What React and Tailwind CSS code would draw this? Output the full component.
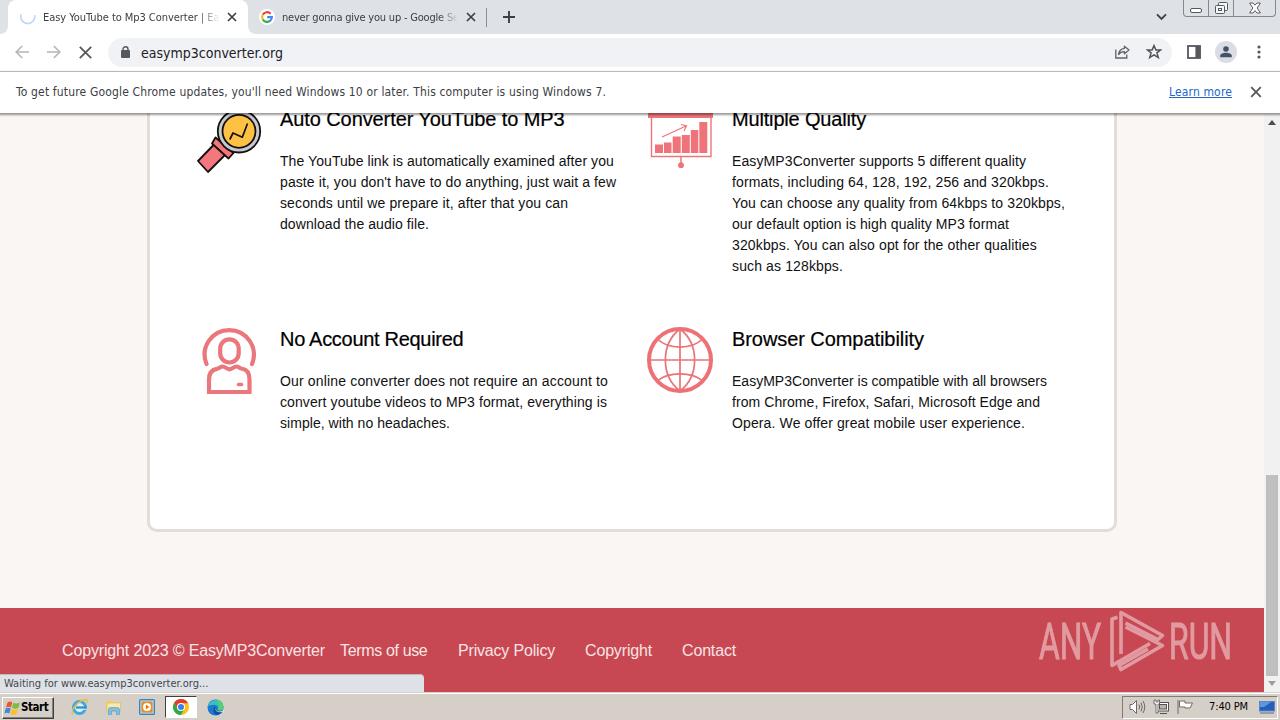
const ui = "font-['DejaVu_Sans_Condensed','DejaVu_Sans',sans-serif] whitespace-nowrap";

function Cross({ size, width, color }) {
  return (
    <svg width={size} height={size} viewBox="0 0 10 10" className="shrink-0">
      <path d="M1 1L9 9M9 1L1 9" stroke={color} strokeWidth={width} fill="none" />
    </svg>
  );
}

function GoogleG() {
  return (
    <svg width="16" height="16" viewBox="0 0 16 16" className="shrink-0">
      <circle cx="8" cy="8" r="8" fill="#fff" />
      <g fill="none" strokeWidth="2.1">
        <path d="M11.6 4.7A4.9 4.9 0 0 0 3.8 5.6" stroke="#ea4335" />
        <path d="M3.8 5.5A4.9 4.9 0 0 0 3.8 10.5" stroke="#fbbc05" />
        <path d="M3.8 10.4A4.9 4.9 0 0 0 11.4 11.6" stroke="#34a853" />
        <path d="M11.3 11.7A4.9 4.9 0 0 0 12.9 8.1H8.2" stroke="#4285f4" />
      </g>
    </svg>
  );
}

function ChromeLogo() {
  return (
    <svg width="16" height="16" viewBox="0 0 16 16">
      <circle cx="8" cy="8" r="8" fill="#fbc116" />
      <path d="M8 4.2H15A8 8 0 0 0 1.07 4L4.6 10Z" fill="#e33b2e" />
      <path d="M1.07 4A8 8 0 0 0 8 16L11.3 10L8 8L4.7 10Z" fill="#2da94f" />
      <circle cx="8" cy="8" r="4" fill="#fff" />
      <circle cx="8" cy="8" r="3" fill="#3b7ded" />
    </svg>
  );
}

function TabStrip() {
  return (
    <div className={`flex h-[34px] bg-[#dee1e6] text-[11px] text-[#3c4043] ${ui}`}>
      <div className="flex w-2 items-end bg-white">
        <div className="h-[34px] w-2 rounded-br-lg bg-[#dee1e6]" />
      </div>
      <div className="flex w-[240px] items-center rounded-t-lg bg-white pl-3">
        <svg width="16" height="16" viewBox="0 0 16 16" className="mr-[7px] shrink-0">
          <path d="M1.2 5.2A7 7 0 1 0 14.6 6" stroke="#bfd3f6" strokeWidth="1.6" fill="none" />
        </svg>
        <div className="w-[176px] overflow-hidden pt-[2px] tracking-[-0.05px] [mask-image:linear-gradient(to_right,black_155px,transparent_177px)]">
          Easy YouTube to Mp3 Converter | EasyMP3
        </div>
        <div className="ml-[8px]"><Cross size={10} width={1.7} color="#3c4043" /></div>
      </div>
      <div className="flex w-[238px] bg-white">
        <div className="flex h-[34px] w-full items-center rounded-bl-lg bg-[#dee1e6] pl-[11px]">
          <GoogleG />
          <div className="ml-[7px] w-[175px] overflow-hidden pt-[2px] tracking-[-0.2px] [mask-image:linear-gradient(to_right,black_157px,transparent_176px)]">
            never gonna give you up - Google Search
          </div>
          <div className="ml-[9px]"><Cross size={10} width={1.7} color="#3c4043" /></div>
        </div>
      </div>
      <div className="mt-[8px] h-[19px] w-px bg-[#8a8d91]" />
      <svg width="12" height="12" viewBox="0 0 12 12" className="ml-4 mt-[11px]">
        <path d="M6 0V12M0 6H12" stroke="#3c4043" strokeWidth="1.9" />
      </svg>
      <svg width="11" height="8" viewBox="0 0 11 8" className="ml-auto mt-[13px]">
        <path d="M1 1.3L5.5 5.8L10 1.3" stroke="#3c4043" strokeWidth="1.9" fill="none" />
      </svg>
      <div className="ml-[16px] mr-[4px] flex h-[17px] w-[93px] rounded-b border border-t-0 border-[#85888f]">
        <div className="flex w-[25px] items-center justify-center border-r border-[#85888f]">
          <svg width="12" height="17" viewBox="0 0 12 17"><rect x=".5" y="8.5" width="11" height="4" rx="1.5" fill="#fff" stroke="#55585e" /></svg>
        </div>
        <div className="flex w-[25px] items-center justify-center border-r border-[#85888f]">
          <svg width="13" height="14" viewBox="0 0 13 14" fill="#f4f5f7" stroke="#55585e">
            <rect x="3.5" y="1.5" width="9" height="8" rx="1" />
            <rect x=".5" y="4.5" width="9" height="8" rx="1" />
            <rect x="3.5" y="7.5" width="3" height="2" />
          </svg>
        </div>
        <div className="flex flex-1 items-center justify-center">
          <svg width="12" height="12" viewBox="0 0 12 12">
            <path d="M.6 1H4L6 3.2L8 1H11.4L8.2 6L11.4 11H8L6 8.6L4 11H.6L3.8 6Z" fill="#fff" stroke="#5c5f66" />
          </svg>
        </div>
      </div>
    </div>
  );
}

function Toolbar() {
  return (
    <div className="flex h-[38px] shrink-0 items-center border-b border-[#d4d5d7] bg-white pb-px">
      <svg width="14" height="14" viewBox="0 0 14 14" className="ml-[15px]" fill="none" stroke="#b5b7ba" strokeWidth="1.7">
        <path d="M14 7H1.4M7.2 1L1.2 7L7.2 13" />
      </svg>
      <svg width="14" height="14" viewBox="0 0 14 14" className="ml-[18px]" fill="none" stroke="#b5b7ba" strokeWidth="1.7">
        <path d="M0 7H12.6M6.8 1L12.8 7L6.8 13" />
      </svg>
      <svg width="13" height="13" viewBox="0 0 13 13" className="ml-[18px]" fill="none" stroke="#55585c" strokeWidth="1.8">
        <path d="M.8 .8L12.2 12.2M12.2 .8L.8 12.2" />
      </svg>
      <div className="ml-[16px] flex h-[29px] w-[1064px] items-center rounded-full bg-[#f0f2f5] pl-[13px]">
        <svg width="9" height="12" viewBox="0 0 9 12">
          <rect x="0" y="4" width="9" height="8" rx="1" fill="#55585c" />
          <path d="M2 5V3.2A2.5 2.5 0 0 1 7 3.2V5" stroke="#55585c" strokeWidth="1.4" fill="none" />
        </svg>
        <span className={`ml-[11px] pt-px text-[14px] leading-5 text-[#202124] ${ui}`}>easymp3converter.org</span>
        <svg width="15" height="14" viewBox="0 0 15 14" className="ml-auto" fill="none" stroke="#5f6368" strokeWidth="1.3">
          <path d="M.8 4.5V13H11.8V9.6" />
          <path d="M9.4 1.2L14 5L9.4 8.8V6.7C6.6 6.6 4.9 7.6 3.5 9.5C3.9 6.4 5.8 3.8 9.4 3.3Z" strokeLinejoin="round" />
        </svg>
        <svg width="16" height="16" viewBox="0 0 16 16" className="ml-[16px] mr-[10px]">
          <path d="M8 1.6L9.9 6H14.6L10.9 8.9L12.3 13.6L8 10.8L3.7 13.6L5.1 8.9L1.4 6H6.1Z" fill="none" stroke="#4f5257" strokeWidth="1.5" />
        </svg>
      </div>
      <svg width="14" height="14" viewBox="0 0 14 14" className="ml-[15px]">
        <rect x="1" y="1" width="12" height="12" fill="none" stroke="#55585c" strokeWidth="1.8" />
        <rect x="8.4" y="1" width="5" height="12" fill="#55585c" />
      </svg>
      <svg width="22" height="22" viewBox="0 0 22 22" className="ml-[14px]">
        <circle cx="11" cy="11" r="11" fill="#dadde3" />
        <circle cx="11" cy="8" r="2.8" fill="#475069" />
        <path d="M5.2 16.2V14.8C5.2 12.8 8.2 11.8 11 11.8S16.8 12.8 16.8 14.8V16.2Z" fill="#475069" />
      </svg>
      <svg width="4" height="14" viewBox="0 0 4 14" className="ml-5" fill="#55585c">
        <circle cx="2" cy="2" r="1.6" /><circle cx="2" cy="7" r="1.6" /><circle cx="2" cy="12" r="1.6" />
      </svg>
    </div>
  );
}

function InfoBar() {
  return (
    <div className={`relative z-10 flex h-[41px] shrink-0 items-center bg-white pb-[2px] pl-4 text-[12px] text-[#3c4043] shadow-[0_1px_2px_1px_rgba(0,0,0,0.4)] ${ui}`}>
      <span className="tracking-[0.16px]">To get future Google Chrome updates, you'll need Windows 10 or later. This computer is using Windows 7.</span>
      <span className="ml-auto mr-[18px] tracking-[0.15px] text-[#2467c8] underline">Learn more</span>
      <div className="mr-[18px]"><Cross size={12} width={1.5} color="#55585c" /></div>
    </div>
  );
}

function Magnifier() {
  return (
    <svg width="66" height="66" viewBox="0 0 66 66" className="shrink-0 overflow-visible" stroke="#15100f" strokeWidth="1.8" strokeLinejoin="round">
      <path d="M17 37.5L1 54L11 65L28 48Z" fill="#f3777c" />
      <path d="M18.500 30.500L15 36.500L31.500 51.500L36.500 46Z" fill="#f3777c" />
      <circle cx="42" cy="24.300" r="21.200" fill="#c6c8d2" />
      <circle cx="42" cy="24.300" r="16.500" fill="#fdc143" />
      <path d="M32.800 32.500L36 26L45.300 30.200L50.500 16.500" fill="none" strokeWidth="1.700" />
    </svg>
  );
}

function Chart() {
  return (
    <svg width="66" height="66" viewBox="0 0 66 66" className="shrink-0" fill="#ee7479">
      <rect x="1" y="2" width="65" height="9" />
      <path d="M4.500 11V49.500H64V11" fill="none" stroke="#ee7479" strokeWidth="1.400" />
      <rect x="8" y="37.500" width="8" height="8.500" />
      <rect x="17" y="35.500" width="7.500" height="10.500" />
      <rect x="25.700" y="29.500" width="8" height="16.500" />
      <rect x="34.800" y="28" width="8" height="18" />
      <rect x="43.800" y="23" width="7.500" height="23" />
      <rect x="52.300" y="15" width="8" height="31" />
      <path d="M15 30L39 19M34 17.500L39.500 18.800L37 24" fill="none" stroke="#ee7479" strokeWidth="1.200" />
      <path d="M34 49V56" stroke="#ee7479" strokeWidth="1.500" />
      <circle cx="34" cy="58.200" r="2.900" />
    </svg>
  );
}

function Person() {
  return (
    <svg width="66" height="68" viewBox="0 0 66 68" className="shrink-0" fill="none" stroke="#ea777b" strokeWidth="4.200" strokeLinecap="round" strokeLinejoin="round">
      <path d="M9.500 37A24.600 24.600 0 1 1 55 37" />
      <rect x="23.200" y="12.300" width="18.500" height="23.200" rx="9.200" />
      <path d="M12 65V52.500C12 45.500 15.500 42.500 20 41.800C22.500 41.400 23.500 39.500 25.500 39.500C28.500 39.500 29.500 42.300 32.500 42.300S36.500 39.500 39.500 39.500C41.500 39.500 42.500 41.400 45 41.800C49.500 42.500 52.500 45.500 52.500 52.500V65Z" strokeLinejoin="miter" />
      <path d="M41.500 57.500H44.500" strokeWidth="3.600" />
    </svg>
  );
}

function Globe() {
  return (
    <svg width="66" height="66" viewBox="0 0 66 66" className="shrink-0" fill="none" stroke="#ec7276" strokeWidth="1.700">
      <circle cx="33" cy="33" r="31" strokeWidth="4" />
      <path d="M33 2V64M2 33H64" />
      <path d="M33 2C13.500 17 13.500 49 33 64C52.500 49 52.500 17 33 2Z" />
      <path d="M10.500 12C21 22.700 45 22.700 55.500 12M10.500 54C21 44.500 45 44.500 55.500 54" />
    </svg>
  );
}

function Feature({ icon, title, children, gap }) {
  return (
    <div className={`flex ${gap}`}>
      <div className="mt-[3px]">{icon}</div>
      <div className="whitespace-nowrap text-[14px] leading-[21px] text-[#111]">
        <h3 className="mb-[17px] text-[20px] leading-[30px] text-black [-webkit-text-stroke:0.2px_black]">{title}</h3>
        {children}
      </div>
    </div>
  );
}

function Page() {
  return (
    <div className="flex min-w-0 flex-1 flex-col overflow-hidden bg-[#faf6f3] font-['Liberation_Sans',Arial,sans-serif]">
      <div className="ml-[147px] h-[419px] w-[970px] shrink-0 overflow-hidden rounded-b-[10px] border-[3px] border-t-0 border-[#e3ddd6] bg-white pl-[47px]">
        <div className="-mt-[9px] grid grid-cols-[450px_450px] grid-rows-[220px_200px]">
          <Feature gap="gap-[17px]" icon={<Magnifier />} title={<span className="tracking-[-0.09px]">Auto Converter YouTube to MP3</span>}>
            <p className="tracking-[0.07px]">The YouTube link is automatically examined after you</p>
            <p className="tracking-[0.09px]">paste it, you don't have to do anything, just wait a few</p>
            <p className="tracking-[0.12px]">seconds until we prepare it, after that you can</p>
            <p className="tracking-[0.08px]">download the audio file.</p>
          </Feature>
          <Feature gap="gap-[19px]" icon={<Chart />} title={<span className="tracking-[-0.17px]">Multiple Quality</span>}>
            <p className="tracking-[0.106px]">EasyMP3Converter supports 5 different quality</p>
            <p className="tracking-[0.13px]">formats, including 64, 128, 192, 256 and 320kbps.</p>
            <p className="tracking-[0.117px]">You can choose any quality from 64kbps to 320kbps,</p>
            <p className="tracking-[0.086px]">our default option is high quality MP3 format</p>
            <p className="tracking-[0.136px]">320kbps. You can also opt for the other qualities</p>
            <p className="tracking-[0.128px]">such as 128kbps.</p>
          </Feature>
          <Feature gap="gap-[17px]" icon={<Person />} title={<span className="tracking-[-0.3px]">No Account Required</span>}>
            <p className="tracking-[0.16px]">Our online converter does not require an account to</p>
            <p className="tracking-[0.095px]">convert youtube videos to MP3 format, everything is</p>
            <p className="tracking-[0.043px]">simple, with no headaches.</p>
          </Feature>
          <Feature gap="gap-[19px]" icon={<Globe />} title={<span className="tracking-[-0.07px]">Browser Compatibility</span>}>
            <p className="tracking-[0.014px]">EasyMP3Converter is compatible with all browsers</p>
            <p className="tracking-[0.063px]">from Chrome, Firefox, Safari, Microsoft Edge and</p>
            <p className="tracking-[0.124px]">Opera. We offer great mobile user experience.</p>
          </Feature>
        </div>
      </div>
      <footer className="mt-[76px] flex h-[84px] shrink-0 items-start whitespace-nowrap bg-[#c74852] pl-[62px] pt-[31px] text-[16px] leading-6 text-[#f8e4e5]">
        <span className="w-[278px] tracking-[-0.15px]">Copyright 2023 © EasyMP3Converter</span>
        <span className="w-[118px] tracking-[-0.35px]">Terms of use</span>
        <span className="w-[127px] tracking-[-0.18px]">Privacy Policy</span>
        <span className="w-[97px] tracking-[-0.16px]">Copyright</span>
        <span className="tracking-[-0.16px]">Contact</span>
      </footer>
    </div>
  );
}

function Watermark() {
  return (
    <svg width="196" height="66" viewBox="0 0 196 66" className="absolute left-[1037px] top-[608px]" fill="#fff" opacity="0.45" fontFamily="Roboto, sans-serif" fontSize="50" fontWeight="400">
      <g stroke="#fff" strokeWidth="1">
        <text x="2" y="50.500" textLength="62" lengthAdjust="spacingAndGlyphs">ANY</text>
        <text x="132" y="50.500" textLength="63" lengthAdjust="spacingAndGlyphs">RUN</text>
      </g>
      <path
        d="M80.500 9.300L75 11V57.500L113 35.500M84 46V4.500L125.500 27.500L121 31.500L88.500 15M88.500 19L125.500 37.500L84 61.500L82 57.500L111 41"
        fill="none" stroke="#fff" strokeWidth="3.600" strokeLinejoin="round" />
    </svg>
  );
}

function ScrollBar() {
  return (
    <div className="flex w-4 shrink-0 flex-col items-center bg-[#f1f1f1]">
      <svg width="8" height="5" viewBox="0 0 8 5" className="mt-[7px]"><path d="M0 5L4 0L8 5Z" fill="#4c4c4c" /></svg>
      <div className="mt-[350px] h-[201px] w-3 bg-[#bfbfbf]" />
      <svg width="8" height="5" viewBox="0 0 8 5" className="mt-[5px]"><path d="M0 0H8L4 5Z" fill="#9c9c9c" /></svg>
    </div>
  );
}

function TaskBar() {
  return (
    <div className={`flex h-7 shrink-0 items-end border-t border-[#d5d1c8] bg-[#d6cfc8] text-[11px] text-black ${ui}`}>
      <div className="flex h-[27px] w-full items-center border-t border-white">
        <div className="ml-[2px] mt-[2px] flex h-[22px] w-[52px] items-center border border-b-[#404040] border-l-white border-r-[#404040] border-t-white pl-px shadow-[inset_-1px_-1px_0_#85807a]">
          <svg width="17" height="16" viewBox="0 0 17 16" className="shrink-0">
            <path d="M3.500 2.500C5.500 1 7 1.500 8.300 2.300L7 7.500C5.500 6.500 4 6.500 2 7.500Z" fill="#e8582a" />
            <path d="M9.300 2.800C11.500 4 13.500 3.800 16 2.500L14.300 8C12 9 10.500 8.800 8 7.800Z" fill="#7dbb42" />
            <path d="M1.700 8.600C3.500 7.500 5.300 7.600 6.700 8.500L5.300 13.500C4 12.500 2.500 12.300 .4 13.500Z" fill="#3c8ad8" />
            <path d="M7.700 8.800C10 10 12 9.800 14 9L12.500 14C10.500 15.500 8.500 15 6.300 14Z" fill="#fac02c" />
          </svg>
          <span className="text-[11.5px] font-bold tracking-[-0.45px]">Start</span>
        </div>
        <svg width="18" height="18" viewBox="0 0 18 18" className="ml-[17px]">
          <circle cx="8.500" cy="9.500" r="6" fill="#d9effa" stroke="#3fa9e2" strokeWidth="3" />
          <path d="M5 9.500H15.500" stroke="#2a90d2" strokeWidth="2.200" />
          <path d="M12 12H17V10.700H12Z" fill="#d6cfc8" />
          <path d="M2 16.500C-1 14 4 6 11 2.500C16 .3 17.500 2 15.500 5.500" fill="none" stroke="#e9bd45" strokeWidth="1.400" />
        </svg>
        <svg width="17" height="16" viewBox="0 0 17 16" className="ml-[16px]">
          <path d="M1 1.500H6L7.500 3H14V13H1Z" fill="#efcf74" />
          <path d="M2 4H15.500V12H2Z" fill="#f9e8a8" stroke="#d6b559" strokeWidth=".6" />
          <path d="M3.500 15.500V10.500Q3.500 8.500 5.500 8.500H12.500Q14.500 8.500 14.500 10.500V15.500H11.500V12H6.500V15.500Z" fill="#7cc0e6" stroke="#4e9ccc" strokeWidth=".6" />
        </svg>
        <svg width="16" height="16" viewBox="0 0 16 16" className="ml-[17px]">
          <rect x=".6" y=".6" width="14.800" height="14.800" rx="1" fill="#a7d0ee" stroke="#4480b5" strokeWidth="1.200" />
          <rect x="2.500" y="2.500" width="11" height="11" rx="1.500" fill="#f28c1d" />
          <circle cx="8" cy="8" r="4" fill="#fff" />
          <path d="M6.800 5.500L10.500 8L6.800 10.500Z" fill="#e97b10" />
        </svg>
        <div className="ml-[10px] flex h-[22px] w-[32px] items-center justify-center border border-b-white border-l-[#404040] border-r-white border-t-[#404040] bg-white">
          <ChromeLogo />
        </div>
        <svg width="17" height="17" viewBox="0 0 17 17" className="ml-[10px]">
          <circle cx="8.500" cy="8.500" r="8" fill="#1b79cf" />
          <path d="M.6 8A8 8 0 0 1 16.500 8C16.800 11 13.500 12.200 10.500 11C12 9 10.500 5.800 7 5.800C4 5.800 1.500 6.500 .6 8Z" fill="#38c1c4" />
          <path d="M9 .6C13.500 .8 16.600 4 16.500 8C16.300 11.500 13 12.200 10.500 11C12.500 8 13 4 9 .6Z" fill="#56cf6d" />
          <path d="M10.500 11C8.500 10 8 8.500 8.800 7.500C6 8 5 14 9.500 16C12.500 15.500 14.500 14 15.500 12C14 12.700 11.500 12.300 10.500 11Z" fill="#12509c" />
          <path d="M8.600 7.600C7.600 9 8.500 11.500 11 12.200C13.500 12.800 15.500 12 16.800 10.800L17 12.500L13 13.200C10 13.300 7 11 8.600 7.600Z" fill="#d6e9ef" />
        </svg>
        <div className="ml-auto mr-[2px] flex h-[23px] w-[156px] items-center border border-b-white border-l-[#7f7b75] border-r-white border-t-[#7f7b75] pl-[6px]">
          <svg width="17" height="16" viewBox="0 0 17 16" fill="none" stroke="#6c6a67">
            <path d="M1 5.500H3.500L7.500 1.500V14.500L3.500 10.500H1Z" fill="#fff" />
            <path d="M10 5.500Q11.500 8 10 10.500M12 3.500Q14.500 8 12 12.500M14 2Q17.500 8 14 14" />
          </svg>
          <svg width="17" height="16" viewBox="0 0 17 16" className="ml-[7px]" stroke="#55534f" fill="#fff">
            <rect x="4.500" y="3.500" width="11" height="8.500" />
            <rect x="6.500" y="5.500" width="7" height="4.500" fill="#b7b4ae" />
            <path d="M7 14.500H14" />
            <path d="M1 1V5H3V14H5V5H6.500V1H5V3H3V1Z" strokeWidth=".8" />
          </svg>
          <svg width="17" height="16" viewBox="0 0 17 16" className="ml-[7px]" stroke="#6c6a67" fill="#fff">
            <path d="M1 1V15M2.500 2H8V4H15.500L13 9H8V8H2.500Z" />
          </svg>
          <span className="ml-[15px] pt-px tracking-[-0.12px]">7:40 PM</span>
          <svg width="16" height="13" viewBox="0 0 16 13" className="ml-[11px]">
            <rect x=".5" y=".5" width="15" height="9.500" fill="#2460b8" stroke="#5d86c0" />
            <path d="M1 1H12L5 6H1Z" fill="#5b97e2" />
            <path d="M1 12H15" stroke="#7d8b9d" strokeWidth="1.500" />
          </svg>
        </div>
      </div>
    </div>
  );
}

export default function App() {
  return (
    <div className="relative flex h-[720px] w-[1280px] flex-col overflow-hidden bg-white">
      <TabStrip />
      <Toolbar />
      <InfoBar />
      <div className="flex h-[579px] shrink-0">
        <Page />
        <ScrollBar />
      </div>
      <TaskBar />
      <Watermark />
      <div className={`absolute left-0 top-[674px] flex h-[18px] w-[424px] items-center rounded-tr border-t border-[#c3b7c0] bg-[#dee1e6] pl-1 pt-[2px] text-[11px] text-[#45484c] ${ui}`}>
        Waiting for www.easymp3converter.org...
      </div>
    </div>
  );
}
